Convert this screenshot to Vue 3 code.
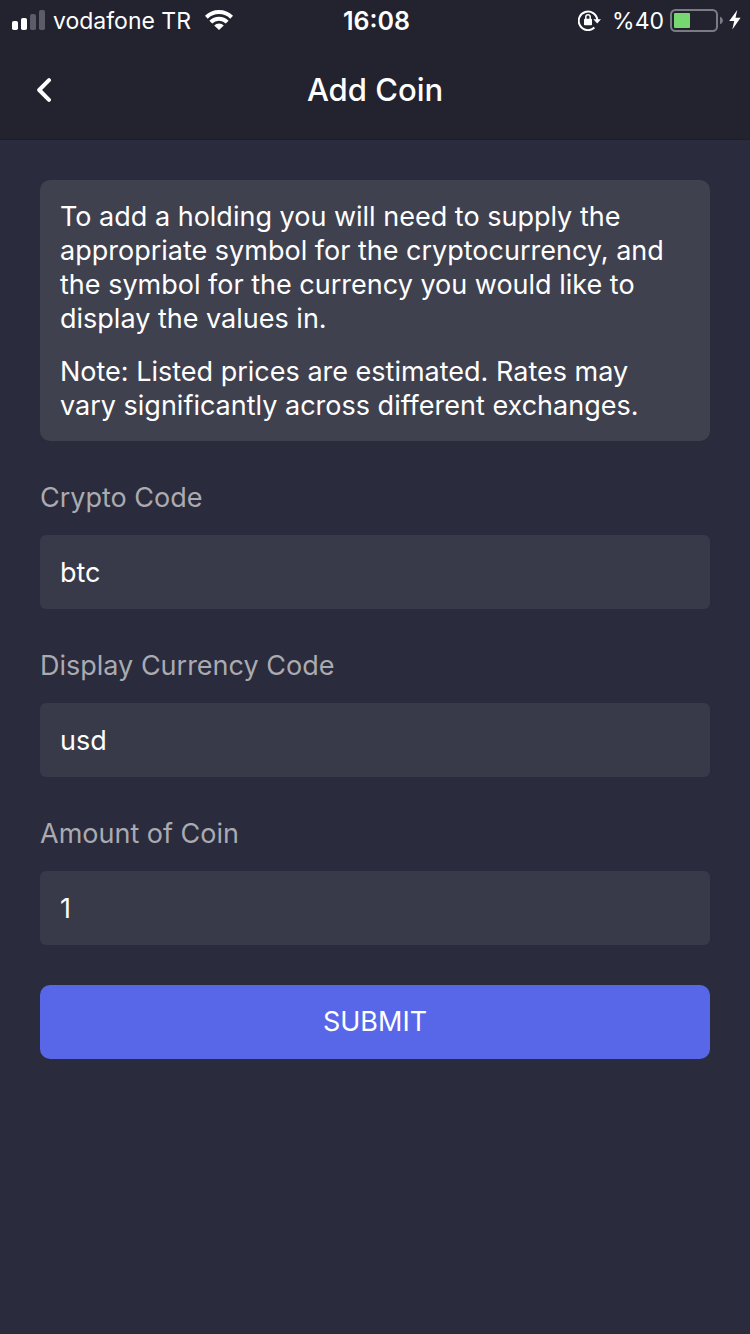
<script setup>
import { ref } from 'vue'

const notes = [
  'To add a holding you will need to supply the appropriate symbol for the cryptocurrency, and the symbol for the currency you would like to display the values in.',
  'Note: Listed prices are estimated. Rates may vary significantly across different exchanges.',
]

const fields = ref([
  { id: 'crypto-code', label: 'Crypto Code', value: 'btc' },
  { id: 'currency-code', label: 'Display Currency Code', value: 'usd' },
  { id: 'coin-amount', label: 'Amount of Coin', value: '1' },
])
</script>

<template>
  <div class="screen">
    <div class="status">
      <div class="side">
        <svg class="icon" width="33" height="20" viewBox="0 0 33 20" fill="#fff" aria-hidden="true">
          <rect x="0" y="11" width="6" height="9" rx="1.8" />
          <rect x="9" y="8" width="6" height="12" rx="1.8" />
          <rect x="18" y="4" width="6" height="16" rx="1.8" fill="#5c5b69" />
          <rect x="27" y="0" width="6" height="20" rx="1.8" fill="#5c5b69" />
        </svg>
        <span class="carrier">vodafone TR</span>
        <svg class="icon" width="28" height="20" viewBox="0 0 28 20" aria-hidden="true">
          <g fill="none" stroke="#fff" stroke-width="4">
            <path d="M1.300 7.200A18.200 18.200 0 0 1 26.700 7.200" />
            <path d="M5.800 12.200A11.600 11.600 0 0 1 22.200 12.200" />
          </g>
          <path d="M14 20L9.200 15.500A6.600 6.600 0 0 1 18.800 15.500Z" fill="#fff" />
        </svg>
      </div>
      <time class="clock">16:08</time>
      <div class="side end">
        <svg class="icon" width="24" height="22" viewBox="0 0 24 22" aria-hidden="true">
          <path d="M16.400 18.600A9.300 9.300 0 1 1 19.300 11" fill="none" stroke="#fff" stroke-width="2" />
          <path d="M15.400 10.200H23L19.200 14.600Z" fill="#fff" />
          <rect x="6" y="9.800" width="8" height="6.400" rx="0.8" fill="#fff" />
          <path d="M7.800 10.400V8A2.200 2.200 0 0 1 12.200 8V10.400" fill="none" stroke="#fff" stroke-width="1.500" />
        </svg>
        <span class="percent">%40</span>
        <svg class="icon" width="53" height="24" viewBox="0 0 53 24" aria-hidden="true">
          <rect x="1" y="2" width="46" height="21" rx="4.500" fill="none" stroke="#7b7b85" stroke-width="2" />
          <rect x="4" y="5" width="16" height="15" rx="1" fill="#77d872" />
          <path d="M50 8.500Q53 10 53 12.400Q53 14.800 50 16.300Z" fill="#7b7b85" />
        </svg>
        <svg class="icon" width="12" height="20" viewBox="0 0 12 20" aria-hidden="true">
          <path d="M8.300 0L0.200 11H5.200L3.300 19.500L11.600 7.800H6.500Z" fill="#fff" />
        </svg>
      </div>
    </div>

    <header class="bar">
      <button class="back" type="button" aria-label="Back">
        <svg width="16" height="24" viewBox="0 0 16 24" aria-hidden="true">
          <path d="M13 2.200L3.200 12L13 21.800" fill="none" stroke="#fff" stroke-width="4" stroke-linecap="round" stroke-linejoin="round" />
        </svg>
      </button>
      <h1 class="title">Add Coin</h1>
    </header>

    <main class="content">
      <section class="notice">
        <p v-for="note in notes" :key="note">{{ note }}</p>
      </section>
      <form class="form" @submit.prevent>
        <div v-for="field in fields" :key="field.id" class="field">
          <label :for="field.id">{{ field.label }}</label>
          <input :id="field.id" v-model="field.value" type="text" autocomplete="off" />
        </div>
        <button class="submit" type="submit">SUBMIT</button>
      </form>
    </main>
  </div>
</template>

<style>
body {
  background: #2a2b3c;
}
</style>

<style scoped>
.screen {
  min-height: 100vh;
  background: #2a2b3c;
  color: #fff;
  font-family: Inter, "Liberation Sans", sans-serif;
  font-size: 27px;
  line-height: 34px;
}

.status {
  display: grid;
  grid-template-columns: 1fr auto 1fr;
  align-items: center;
  height: 40px;
  padding: 0 9px 0 12px;
  background: #22232f;
  font-size: 23px;
  line-height: 32px;
}

.side {
  display: flex;
  align-items: center;
  gap: 6px;
}

.end {
  justify-content: flex-end;
}

.icon {
  flex: none;
}

.carrier,
.clock,
.percent {
  padding-top: 2px;
}

.carrier {
  margin: 0 8px 0 2px;
}

.clock {
  font-size: 25px;
  font-weight: 600;
}

.percent {
  margin-left: 4px;
}

.bar {
  display: grid;
  grid-template-columns: 48px 1fr 48px;
  align-items: center;
  height: 100px;
  padding: 0 20px;
  box-sizing: border-box;
  border-bottom: 1px solid #1d1e2b;
  background: #22232f;
}

.back {
  display: flex;
  align-items: center;
  justify-content: center;
  height: 48px;
  padding: 0;
  border: 0;
  background: none;
}

.title {
  margin: 0;
  text-align: center;
  font-size: 31px;
  font-weight: 500;
  line-height: 40px;
}

.content {
  padding: 40px;
}

.notice {
  display: flex;
  flex-direction: column;
  gap: 19px;
  padding: 20px 20px 18px;
  border-radius: 10px;
  background: #40414f;
}

.notice p {
  margin: 0;
}

.form {
  display: flex;
  flex-direction: column;
  gap: 40px;
  margin-top: 40px;
}

.field {
  display: flex;
  flex-direction: column;
  gap: 20px;
}

.field label {
  color: #aaaab1;
}

.field input {
  width: 100%;
  height: 74px;
  box-sizing: border-box;
  padding: 0 20px;
  border: 0;
  border-radius: 6px;
  outline: none;
  background: #393a49;
  color: #fff;
  font: inherit;
}

.submit {
  height: 74px;
  padding: 0 20px;
  border: 0;
  border-radius: 10px;
  background: #5867e8;
  color: #fff;
  font: inherit;
}
</style>
